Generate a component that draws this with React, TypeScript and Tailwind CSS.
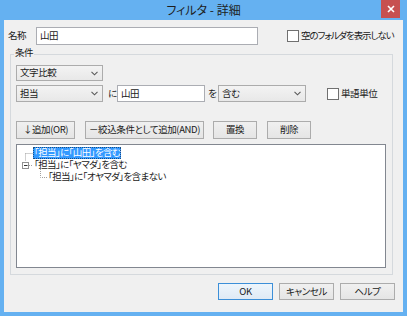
import React from "react";

const Chevron = () => (
  <svg width="7" height="5" viewBox="0 0 7 5" className="shrink-0">
    <path d="M0.5 0.8 L3.5 3.8 L6.5 0.8" fill="none" stroke="#5a5a5a" strokeWidth="1.1" />
  </svg>
);

const Select = ({ text, w, h }: { text: string; w: string; h: string }) => (
  <div
    className={`${w} ${h} flex items-center justify-between border border-[#acacac] bg-gradient-to-b from-[#f3f3f3] to-[#e8e8e8] pl-[3px] pr-[4px] leading-none`}
  >
    <span>{text}</span>
    <Chevron />
  </div>
);

const Btn = ({ text, w, def }: { text: string; w: string; def?: boolean }) => (
  <div
    className={`${w} h-full flex items-center justify-center border leading-none whitespace-nowrap ${
      def
        ? "border-[#3c8fd8] bg-gradient-to-b from-[#edf5fc] to-[#dfeaf5]"
        : "border-[#acacac] bg-gradient-to-b from-[#f0f0f0] to-[#e5e5e5]"
    }`}
  >
    {text}
  </div>
);

const Check = () => (
  <div className="w-[12px] h-[12px] border border-[#707070] bg-white shrink-0" />
);

export default function App() {
  return (
    <div className="w-[407px] h-[316px] bg-[#65b1f1] flex flex-col font-['Noto_Sans_CJK_JP','Noto_Sans',sans-serif] [font-feature-settings:'palt'] text-[9.5px] tracking-[-0.4px] whitespace-nowrap text-[#1a1a1a] overflow-hidden">
      {/* title bar */}
      <div className="h-[20px] relative flex items-center justify-center shrink-0">
        <span className="text-[12px] tracking-normal text-[#1e1e1e] leading-none">フィルタ - 詳細</span>
        <div className="absolute right-[7px] top-0 w-[19px] h-[18px] bg-[#c75050] flex items-center justify-center">
          <svg width="8" height="8" viewBox="0 0 8 8">
            <path d="M1 1 L7 7 M7 1 L1 7" stroke="#ffffff" strokeWidth="1.6" />
          </svg>
        </div>
      </div>

      {/* content */}
      <div className="mx-[4px] mb-[4px] flex-1 bg-[#f0f0f0] flex flex-col">
        {/* name row */}
        <div className="mt-[7px] h-[18px] flex items-center pl-[4px]">
          <span className="w-[28px] leading-none">名称</span>
          <div className="w-[222px] h-full border border-[#abadb3] bg-white flex items-center pl-[3px] leading-none">
            山田
          </div>
          <div className="ml-[29px] flex items-center gap-[2px] leading-none">
            <Check />
            <span className="tracking-[-1.1px]">空のフォルダを表示しない</span>
          </div>
        </div>

        {/* group box */}
        <div className="relative mt-[9px] ml-[6px] w-[383px] border border-[#d5d9dd] pt-[10px] pl-[5px] pb-[6px] flex flex-col">
          <span className="absolute -top-[7px] left-[3px] bg-[#f0f0f0] px-[1px] leading-none">条件</span>

          <Select text="文字比較" w="w-[87px]" h="h-[16px]" />

          <div className="mt-[4px] h-[17px] flex items-center">
            <Select text="担当" w="w-[87px]" h="h-full" />
            <span className="ml-[5px] w-[9px] leading-none">に</span>
            <div className="w-[88px] h-full border border-[#abadb3] bg-white flex items-center pl-[3px] leading-none">
              山田
            </div>
            <span className="ml-[3px] w-[10px] leading-none">を</span>
            <Select text="含む" w="w-[88px]" h="h-full" />
            <div className="ml-[21px] flex items-center gap-[2px] leading-none">
              <Check />
              <span>単語単位</span>
            </div>
          </div>

          <div className="mt-[19px] h-[18px] flex">
            <Btn text="↓追加(OR)" w="w-[59px]" />
            <div className="ml-[10px] h-full">
              <Btn text="－絞込条件として追加(AND)" w="w-[119px]" />
            </div>
            <div className="ml-[9px] h-full">
              <Btn text="置換" w="w-[44px]" />
            </div>
            <div className="ml-[10px] h-full">
              <Btn text="削除" w="w-[44px]" />
            </div>
          </div>

          {/* tree */}
          <div className="relative mt-[5px] w-[370px] h-[124px] border border-[#828790] bg-white pt-[2px] flex flex-col tracking-[-0.6px]">
            <svg className="absolute left-0 top-0" width="60" height="40" viewBox="0 0 60 40">
              <g stroke="#a0a0a0" strokeWidth="1" strokeDasharray="1 1" fill="none">
                <path d="M8.5 8.5 H16" />
                <path d="M8.5 8.5 V16" />
                <path d="M12 20.5 H16" />
                <path d="M23.5 24 V32.5 H30" />
              </g>
              <rect x="5.5" y="17.5" width="6" height="6" fill="#fff" stroke="#919191" />
              <path d="M7 20.5 H10.5" stroke="#333" strokeWidth="1" />
            </svg>
            <div className="h-[12px] flex items-center pl-[16px]">
              <span className="h-full flex items-center px-[1px] bg-[#3399ff] text-white leading-none outline-1 outline-dotted outline-[#1a4f85] -outline-offset-1">
                「担当」に「山田」を含む
              </span>
            </div>
            <div className="h-[12px] flex items-center pl-[17px] leading-none">
              「担当」に「ヤマダ」を含む
            </div>
            <div className="h-[12px] flex items-center pl-[31px] leading-none">
              「担当」に「オヤマダ」を含まない
            </div>
          </div>
        </div>

        {/* bottom buttons */}
        <div className="mt-[8px] h-[17px] flex justify-end pr-[8px] gap-[6px]">
          <Btn text="OK" w="w-[55px]" def />
          <Btn text="キャンセル" w="w-[55px]" />
          <Btn text="ヘルプ" w="w-[55px]" />
        </div>
      </div>
    </div>
  );
}
